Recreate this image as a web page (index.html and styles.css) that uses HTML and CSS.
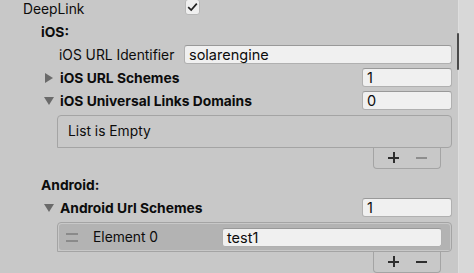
FILE: index.html
```html
<!DOCTYPE html>
<html lang="en">
<head>
  <meta charset="UTF-8" />
  <title>DeepLink Inspector</title>
  <link rel="stylesheet" href="styles.css">
</head>
<body>

  <div class="inspector">
    <div class="row lvl0">
      <span class="label">DeepLink</span>
      <span class="toggle">
        <svg width="11" height="10" viewBox="0 0 11 10"><path d="M1.2 5.2 L4.2 8 L9.8 1.6" fill="none" stroke="#222" stroke-width="1.7"/></svg>
      </span>
    </div>

    <div class="row lvl1"><span class="label bold">iOS:</span></div>

    <div class="row lvl2">
      <span class="label">iOS URL Identifier</span>
      <span class="field wide">solarengine</span>
    </div>

    <div class="row lvl2f">
      <span class="fold closed"></span>
      <span class="label bold">iOS URL Schemes</span>
      <span class="field int">1</span>
    </div>

    <div class="row lvl2f">
      <span class="fold open"></span>
      <span class="label bold">iOS Universal Links Domains</span>
      <span class="field int">0</span>
    </div>

    <div class="list">
      <div class="list-body empty">List is Empty</div>
      <div class="list-footer">
        <span class="btn plus"></span>
        <span class="btn minus off"></span>
      </div>
    </div>

    <div class="row lvl1 spaced"><span class="label bold">Android:</span></div>

    <div class="row lvl2f">
      <span class="fold open"></span>
      <span class="label bold">Android Url Schemes</span>
      <span class="field int">1</span>
    </div>

    <div class="list">
      <div class="list-body">
        <div class="element">
          <span class="handle"></span>
          <span class="el-label">Element 0</span>
          <span class="field el-field">test1</span>
        </div>
      </div>
      <div class="list-footer">
        <span class="btn plus"></span>
        <span class="btn minus"></span>
      </div>
    </div>
  </div>

  <div class="strip"></div>
  <div class="thumb"></div>

</body>
</html>
```

FILE: styles.css
```css
body {
  margin: 0;
  width: 474px;
  height: 273px;
  overflow: hidden;
  background-color: #c8c8c8;
  color: #0c0c0c;
  font-family: Inter, "Noto Sans", sans-serif;
  font-size: 13.8px;
  position: relative;
}

.inspector {
  width: 452px;
  margin-top: -3px;
  padding-right: 6px;
}

.row {
  height: 23px;
  display: flex;
  align-items: center;
}

.lvl0 { padding-left: 23px; }
.lvl1 { padding-left: 41px; }
.lvl2 { padding-left: 59px; }
.lvl2f { padding-left: 44px; }

.lvl0 .label { width: 162px; }
.lvl2 .label { width: 125px; }

.bold { font-weight: 700; }

.spaced { margin-top: 4px; }

.toggle {
  width: 15px;
  height: 16px;
  margin-top: -3px;
  background: #efefef;
  border: 1px solid #b8b8b8;
  border-radius: 3px;
  box-sizing: border-box;
  display: flex;
  align-items: center;
  justify-content: center;
}

.field {
  height: 19px;
  box-sizing: border-box;
  background: #f0f0f0;
  border: 1px solid #b0b0b0;
  border-top-color: #999;
  border-radius: 3px;
  padding-left: 4px;
  line-height: 17px;
  font-size: 14.5px;
}

.wide { flex: 1; }

.int {
  width: 90px;
  margin-left: auto;
}

.fold {
  width: 0;
  height: 0;
}

.fold.closed {
  border-top: 5px solid transparent;
  border-bottom: 5px solid transparent;
  border-left: 8px solid #6a6a6a;
  margin-left: 1px;
  margin-right: 7px;
}

.fold.open {
  border-left: 5px solid transparent;
  border-right: 5px solid transparent;
  border-top: 8px solid #6a6a6a;
  margin-right: 6px;
}

.list {
  margin-left: 57px;
  margin-top: 3px;
}

.list-body {
  border: 1px solid #a4a4a4;
  border-radius: 4px 4px 4px 0;
  box-sizing: border-box;
}

.list-body.empty {
  height: 33px;
  padding-left: 10px;
  line-height: 31px;
}

.list-footer {
  width: 68px;
  height: 22px;
  margin-left: 316px;
  margin-top: -1px;
  border: 1px solid #a4a4a4;
  border-top: none;
  border-radius: 0 0 4px 4px;
  box-sizing: border-box;
  display: flex;
  align-items: center;
  gap: 17px;
  padding-left: 14px;
}

.btn {
  width: 11px;
  height: 11px;
  position: relative;
}

.btn::before,
.btn::after {
  content: "";
  position: absolute;
  background: #2e2e2e;
}

.btn::before {
  left: 0;
  top: 5px;
  width: 11px;
  height: 2px;
}

.plus::after {
  left: 5px;
  top: 0;
  width: 2px;
  height: 11px;
}

.minus::after { display: none; }

.off::before { background: #8e8e8e; }

.element {
  height: 26px;
  margin: 1px;
  background: #b3b3b3;
  border-radius: 3px 3px 0 3px;
  display: flex;
  align-items: center;
  padding-right: 8px;
}

.handle {
  width: 12px;
  height: 5px;
  margin-left: 7px;
  border-top: 2px solid #8a8a8a;
  border-bottom: 2px solid #8a8a8a;
}

.el-label {
  margin-left: 15px;
  width: 129px;
}

.el-field {
  flex: 1;
}

.strip {
  position: absolute;
  top: 0;
  right: 0;
  width: 15px;
  height: 273px;
  background: #d8d8d8;
  border-left: 1px solid #dedede;
}

.thumb {
  position: absolute;
  top: 33px;
  left: 457px;
  width: 2px;
  height: 37px;
  border-radius: 1px;
  background: #4a4a4a;
}
```
